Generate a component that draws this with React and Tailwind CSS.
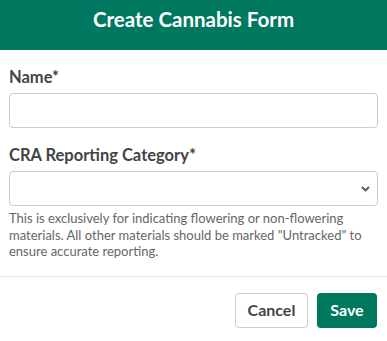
export default function App() {
  return (
    <div className="w-[387px] h-[341px] bg-white overflow-hidden" style={{ fontFamily: "Lato, 'Open Sans', sans-serif" }}>
      <div className="h-[50px] bg-[#00785f] pt-[9px] text-center">
        <h1 className="text-white text-[20.5px] font-bold leading-none">Create Cannabis Form</h1>
      </div>
      <div className="px-[9px] pt-[15px]">
        <label className="block text-[16.5px] font-bold leading-[24px] text-[#444]">Name*</label>
        <div className="mt-[4px] h-[35px] border border-[#cccccc] rounded-[4px]"></div>
        <label className="block mt-[15px] text-[16.5px] font-bold leading-[24px] text-[#444]">CRA Reporting Category*</label>
        <div className="mt-[4px] h-[35px] border border-[#cccccc] rounded-[4px] flex items-center justify-end pr-[7px]">
          <svg width="9" height="6" viewBox="0 0 9 6">
            <path d="M1 1 L4.5 4.5 L8 1" fill="none" stroke="#555" strokeWidth="1.8" />
          </svg>
        </div>
        <p className="mt-[4px] text-[13px] leading-[16.5px] text-[#666]">
          This is exclusively for indicating flowering or non-flowering materials. All other materials should be marked "Untracked" to ensure accurate reporting.
        </p>
      </div>
      <div className="mt-[16px] border-t border-[#e5e5e5] px-[10px] pt-[16px] flex justify-end gap-[9px]">
        <button className="h-[35px] w-[73px] border border-[#cccccc] rounded-[4px] bg-white text-[#444] text-[16px] font-bold">Cancel</button>
        <button className="h-[35px] w-[60px] rounded-[4px] bg-[#00785f] text-white text-[16px] font-bold">Save</button>
      </div>
    </div>
  );
}
